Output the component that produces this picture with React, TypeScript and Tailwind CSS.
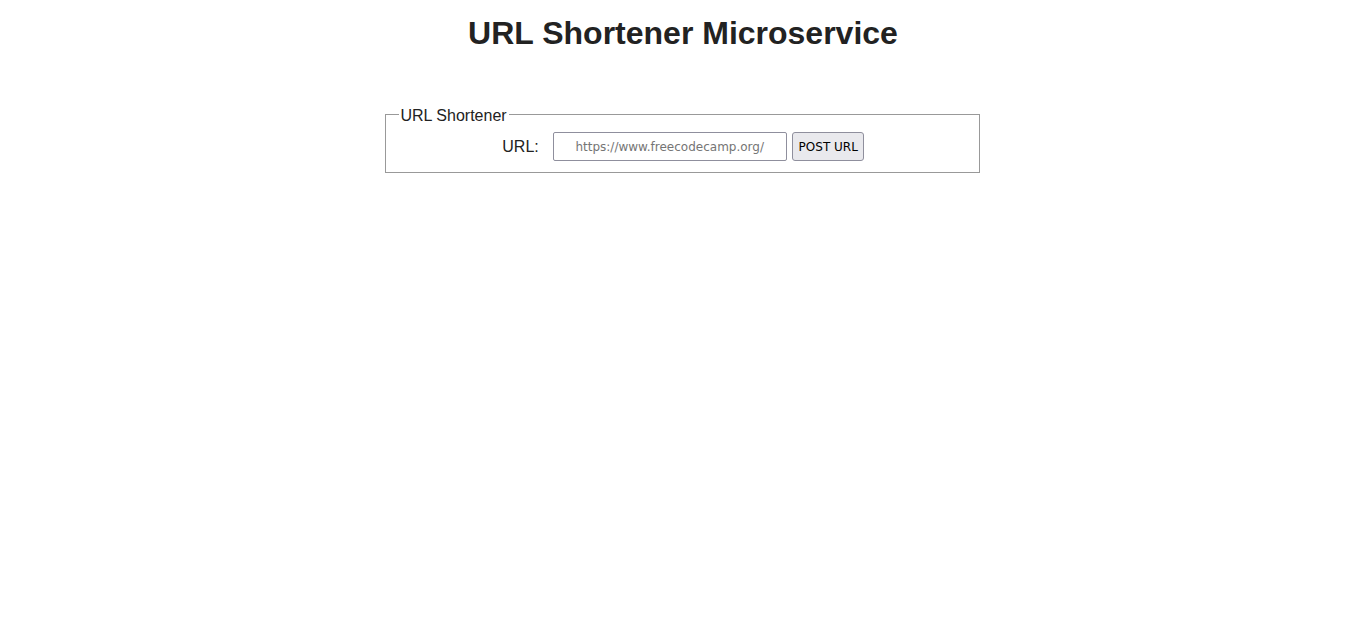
import React, { useState } from "react";

export default function App() {
  const [url, setUrl] = useState("");

  return (
    <div className="min-h-screen bg-white font-['Liberation_Sans',Arial,sans-serif] text-[#222]">
      <h1 className="pt-[15px] text-center text-[32px] font-bold leading-[37px]">
        URL Shortener Microservice
      </h1>
      <form
        className="mx-auto mt-[51px] w-[595px] -translate-x-[1px]"
        onSubmit={(e) => e.preventDefault()}
      >
        <fieldset className="border border-[#999] pb-[11px] pl-[13px] pr-[11px] pt-[7px]">
          <legend className="px-[2px] pt-[4px] text-[16px] leading-[18px]">
            URL Shortener
          </legend>
          <div className="flex items-center justify-center">
            <label htmlFor="url_input" className="mr-[14px] text-[16px]">
              URL:
            </label>
            <input
              id="url_input"
              type="text"
              value={url}
              onChange={(e) => setUrl(e.target.value)}
              placeholder="https://www.freecodecamp.org/"
              className="h-[29px] w-[234px] rounded-[2px] border border-[#8f8f9d] px-[2px] text-center font-['DejaVu_Sans',sans-serif] text-[12px] placeholder:text-[#757575]"
            />
            <button
              type="submit"
              className="ml-[5px] h-[29px] w-[72px] rounded-[3px] border border-[#8f8f9d] bg-[#e9e9ed] pl-[1px] font-['DejaVu_Sans',sans-serif] text-[12px] text-black"
            >
              POST URL
            </button>
          </div>
        </fieldset>
      </form>
    </div>
  );
}
